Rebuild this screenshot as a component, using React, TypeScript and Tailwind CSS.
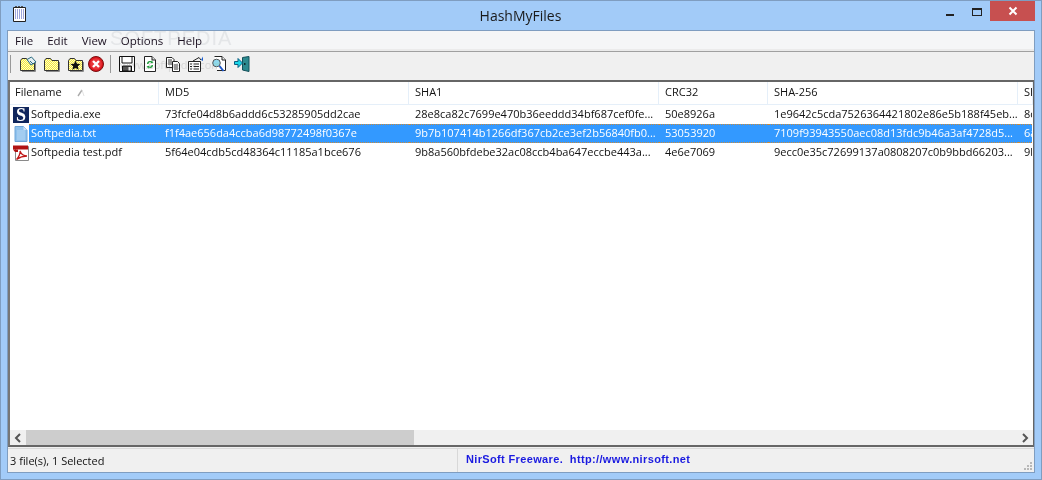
import React from "react";

const font = { fontFamily: '"Open Sans","Noto Sans",sans-serif' };

const rows = [
  { icon: "exe", cells: ["Softpedia.exe", "73fcfe04d8b6addd6c53285905dd2cae", "28e8ca82c7699e470b36eeddd34bf687cef0fe...", "50e8926a", "1e9642c5cda7526364421802e86e5b188f45eb...", "8c"], sel: false },
  { icon: "txt", cells: ["Softpedia.txt", "f1f4ae656da4ccba6d98772498f0367e", "9b7b107414b1266df367cb2ce3ef2b56840fb0...", "53053920", "7109f93943550aec08d13fdc9b46a3af4728d5...", "6a"], sel: true },
  { icon: "pdf", cells: ["Softpedia test.pdf", "5f64e04cdb5cd48364c11185a1bce676", "9b8a560bfdebe32ac08ccb4ba647eccbe443a...", "4e6e7069", "9ecc0e35c72699137a0808207c0b9bbd66203...", "9b"], sel: false },
];

const widths = ["w-[149px]", "w-[250px]", "w-[250px]", "w-[109px]", "w-[250px]", "w-[15px]"];
const cellWidths = ["w-[130px]", "w-[250px]", "w-[250px]", "w-[109px]", "w-[250px]", "w-[14px]"];
const heads = ["Filename", "MD5", "SHA1", "CRC32", "SHA-256", "SHA-512"];

function FolderIcon({ id, star, open }: { id: string; star?: boolean; open?: boolean }) {
  return (
    <svg width="18" height="16" viewBox="0 0 18 16">
      <defs>
        <pattern id={id} width="2" height="2" patternUnits="userSpaceOnUse">
          <rect width="2" height="2" fill="#fffbc8" />
          <rect width="1" height="1" fill="#f4e93c" />
          <rect x="1" y="1" width="1" height="1" fill="#f4e93c" />
        </pattern>
      </defs>
      <path d="M1.5 14.5V4.5L3 2.5H7.5L9 4.5H15.5V14.5Z" fill={`url(#${id})`} stroke="#333" />
      <path d="M16.5 6V15.5H3" fill="none" stroke="#8a8a8a" />
      {star && <path d="M8.5 4.5L10 7.8L13.5 8L10.8 10.3L11.7 13.7L8.5 11.9L5.3 13.7L6.2 10.3L3.5 8L7 7.8Z" fill="#111" />}
      {open && (
        <>
          <path d="M8 3.5L12.5 1L17 6L12 9Z" fill="#e4eef2" stroke="#2a6b80" />
          <path d="M11 5L14 8" stroke="#2a6b80" />
        </>
      )}
    </svg>
  );
}

function ToolIcon({ name }: { name: string }) {
  switch (name) {
    case "open":
      return <FolderIcon id="d1" open />;
    case "folder":
      return <FolderIcon id="d2" />;
    case "star":
      return <FolderIcon id="d3" star />;
    case "stop":
      return (
        <svg width="16" height="16" viewBox="0 0 16 16" className="ml-[-3px]">
          <circle cx="8" cy="8" r="7.5" fill="#d9141c" stroke="#7a1010" />
          <circle cx="8" cy="8" r="5.8" fill="#e8353a" />
          <path d="M5 5L11 11M11 5L5 11" stroke="#fff" strokeWidth="2.4" />
        </svg>
      );
    case "save":
      return (
        <svg width="16" height="16" viewBox="0 0 16 16">
          <path d="M0.5 0.5H15.5V15.5H0.5Z" fill="#fff" stroke="#111" />
          <path d="M3 1V7H13V1" fill="#fff" stroke="#111" />
          <path d="M3.5 15V10H12.5V15Z" fill="#555" stroke="#111" />
          <rect x="9.5" y="11" width="2" height="3.5" fill="#eee" />
        </svg>
      );
    case "refresh":
      return (
        <svg width="16" height="16" viewBox="0 0 16 16">
          <path d="M2.5 0.5H10L13.5 4V15.5H2.5Z" fill="#fff" stroke="#222" />
          <path d="M10 0.5V4H13.5" fill="#ddd" stroke="#222" />
          <path d="M5 8C5 5.5 7 4.5 9.5 5.5L9 4L11.5 6.5L8.5 7.5L9 6.5C7.5 6 6.5 6.8 6.5 8Z" fill="#1d9a3a" />
          <path d="M11 9C11 11.5 9 12.5 6.5 11.5L7 13L4.5 10.5L7.5 9.5L7 10.5C8.5 11 9.5 10.2 9.5 9Z" fill="#1d9a3a" />
        </svg>
      );
    case "copy":
      return (
        <svg width="16" height="16" viewBox="0 0 16 16">
          <path d="M1.5 1.5H7L9 3.5V11.5H1.5Z" fill="#fff" stroke="#222" />
          <path d="M3 4H7M3 6H7M3 8H7" stroke="#333" />
          <path d="M7.5 5.5H12.5L14.5 7.5V15.5H7.5Z" fill="#fff" stroke="#222" />
          <path d="M9 9H13M9 11H13M9 13H13" stroke="#333" />
        </svg>
      );
    case "props":
      return (
        <svg width="16" height="16" viewBox="0 0 16 16">
          <path d="M0.5 5.5H12.5V15.5H0.5Z" fill="#fff" stroke="#222" />
          <path d="M2 8H4M5.5 8H11M2 10.5H4M5.5 10.5H11M2 13H4M5.5 13H11" stroke="#222" />
          <path d="M5 5L11 1.5L13 4" fill="none" stroke="#222" />
          <path d="M13 4L15 0.5V5Z" fill="#1b5fd0" />
        </svg>
      );
    case "find":
      return (
        <svg width="16" height="16" viewBox="0 0 16 16">
          <path d="M3.5 0.5H11L14.5 4V14.5H6" fill="#fff" stroke="#222" />
          <path d="M11 0.5V4H14.5" fill="#eee" stroke="#222" />
          <circle cx="5.5" cy="7" r="3.8" fill="#8fd8ee" stroke="#555" />
          <path d="M8.5 10L12.5 15" stroke="#1b55c8" strokeWidth="2" />
        </svg>
      );
    default:
      return (
        <svg width="16" height="16" viewBox="0 0 16 16">
          <path d="M8.5 1.5L15 0.5V15.5L8.5 14Z" fill="#2c8a8f" stroke="#14505a" />
          <rect x="10" y="7" width="1.5" height="2" fill="#0c2d33" />
          <path d="M0.5 5.5H4V2.5L8.5 7L4 11.5V8.5H0.5Z" fill="#19d6e8" stroke="#0b5d80" />
        </svg>
      );
  }
}

function FileIcon({ kind }: { kind: string }) {
  if (kind === "exe")
    return (
      <div className="w-4 h-4 bg-[#10265c] flex items-center justify-center text-white text-[18px] font-bold leading-none" style={{ fontFamily: '"Liberation Serif",serif' }}>
        S
      </div>
    );
  if (kind === "txt")
    return (
      <svg width="16" height="16" viewBox="0 0 16 16">
        <path d="M2 0.5H10.5L14 4V15.5H2Z" fill="#8fc1ec" stroke="#6fa6d8" />
        <path d="M10.5 0.5V4H14Z" fill="#cfe4f7" />
        <path d="M4 5H12M4 7H12M4 9H12M4 11H12M4 13H12" stroke="#b6d8f5" />
      </svg>
    );
  return (
    <svg width="16" height="16" viewBox="0 0 16 16">
      <path d="M2.5 1.5H15.5V15.5H2.5Z" fill="#fff" stroke="#8a8a8a" />
      <path d="M0 0.5H15V4.5H0Z" fill="#b01313" />
      <path d="M0 4.5H5V7H2Z" fill="#b01313" />
      <path d="M3.5 14.5C6 12 7.5 8 7 6C8 8.5 10 11 14 11C10.5 11 7 12 3.5 14.5Z" fill="none" stroke="#c01818" strokeWidth="1.3" />
    </svg>
  );
}

export default function App() {
  return (
    <div className="w-[1042px] h-[480px] flex flex-col overflow-hidden bg-[#a2cbf8] border border-[#7f9dc0] text-[11px] text-[#111]" style={font}>
      <div className="h-[29px] shrink-0 flex items-center relative">
        <div className="w-[39px] pl-[11px] pb-[1px]">
          <svg width="16" height="16" viewBox="0 0 16 16" className="mt-[-3px]">
            <path d="M1.5 1.5H13.5V15.5H1.5Z" fill="#fff" stroke="#222" />
            <path d="M3 4H12M3 6H12M3 8H12M3 10H12M3 12H12" stroke="#3a4ab8" strokeDasharray="1 1" />
            <path d="M3 0.5H5M6 0.5H8M9 0.5H11" stroke="#555" />
          </svg>
        </div>
        <div className="flex-1 text-center text-[14px] text-[#1a1a1a] pl-[55px] pb-[1px]">HashMyFiles</div>
        <div className="flex items-start self-start h-full">
          <div className="w-[8px] mt-[13px] mr-[18px] h-[2px] bg-[#222]" />
          <div className="w-[10px] h-[8px] mt-[7px] mr-[8px] border border-t-2 border-[#222]" />
          <div className="w-[45px] h-[20px] mr-[6px] bg-[#c75050] flex items-center justify-center">
            <svg width="10" height="10" viewBox="0 0 10 10"><path d="M1.5 1.5L8.5 8.5M8.5 1.5L1.5 8.5" stroke="#fff" strokeWidth="2" /></svg>
          </div>
        </div>
      </div>

      <div className="ml-[6px] mr-[6px] h-[443px] shrink-0 border border-[#7f9dc0] flex flex-col bg-[#f0f0f0] relative">
        <div className="h-[20px] shrink-0 bg-[#f5f6f7] flex items-center pl-[7px] pt-[1px] gap-[14px] border-b-2 border-[#ebebeb] text-[11.5px]">
          {["File", "Edit", "View", "Options", "Help"].map((m) => (
            <span key={m} className="text-[#1a1020]">{m}</span>
          ))}
        </div>
        <div className="h-[29px] shrink-0 border-t border-[#a0a0a0] flex items-center pl-[2px] pb-[4px]">
          <div className="w-[1px] h-[18px] bg-[#999] mr-[8px]" />
          <div className="flex items-center gap-[6px]">
            {["open", "folder", "star", "stop"].map((n) => <ToolIcon key={n} name={n} />)}
          </div>
          <div className="w-[1px] h-[18px] bg-[#999] ml-[6px] mr-[8px]" />
          <div className="flex items-center gap-[7px]">
            {["save", "refresh", "copy", "props", "find", "exit"].map((n) => <ToolIcon key={n} name={n} />)}
          </div>
        </div>

        <div className="flex-1 min-h-0 border-2 border-r border-[#666] border-l-[#777] bg-white flex flex-col overflow-hidden">
          <div className="h-[23px] shrink-0 flex border-b border-[#e5eff9]">
            {heads.map((h, i) => (
              <div key={h} className={`${widths[i]} shrink-0 overflow-hidden whitespace-nowrap border-r border-[#e5eff9] ${i === 0 ? "pl-[5px]" : "pl-[6px]"} pb-[1px] flex items-center`}>
                {h}
                {i === 0 && (
                  <svg width="8" height="8" viewBox="0 0 8 8" className="ml-[15px]"><path d="M1 7L5 1" stroke="#aaa" strokeWidth="1.4" /><path d="M5 1L7 7" stroke="#e3e3e3" /></svg>
                )}
              </div>
            ))}
          </div>
          <div className="flex-1 min-h-0">
            {rows.map((r) => (
              <div key={r.icon} className="h-[19px] flex items-center">
                <div className="w-[19px] shrink-0 pl-[3px]"><FileIcon kind={r.icon} /></div>
                {r.cells.map((c, i) => (
                  <div
                    key={i}
                    className={`${cellWidths[i]} shrink-0 overflow-hidden whitespace-nowrap h-[19px] flex items-center ${i === 0 ? "pl-[2px]" : "pl-[6px]"} ${r.sel ? "bg-[#3399ff] text-white border-y border-dotted border-[#c98a3a]" : ""}`}
                  >
                    {c}
                  </div>
                ))}
              </div>
            ))}
          </div>
          <div className="h-[15px] shrink-0 bg-[#f0f0f0] flex items-center">
            <div className="w-[16px] flex justify-center">
              <svg width="8" height="10" viewBox="0 0 8 10"><path d="M6 1L2 5L6 9" fill="none" stroke="#555" strokeWidth="2" /></svg>
            </div>
            <div className="w-[388px] h-full bg-[#cdcdcd]" />
            <div className="flex-1" />
            <div className="w-[17px] flex justify-center">
              <svg width="8" height="10" viewBox="0 0 8 10"><path d="M2 1L6 5L2 9" fill="none" stroke="#555" strokeWidth="2" /></svg>
            </div>
          </div>
        </div>

        <div className="h-[24px] mt-[1px] border-t border-[#d9d9d9] flex shrink-0 relative">
          <div className="w-[450px] pl-[2px] pt-[1px] flex items-center border-r border-[#d8d8d8]">3 file(s), 1 Selected</div>
          <div className="flex-1 pl-[8px] pb-[2px] flex items-center font-bold text-[11px] tracking-[0.35px] text-[#1a1ae0] whitespace-pre" style={{ fontFamily: '"Liberation Sans",sans-serif' }}>
            NirSoft Freeware.  http://www.nirsoft.net
          </div>
          <svg width="8" height="8" viewBox="0 0 8 8" className="absolute right-[2px] bottom-[2px]">
            <g fill="#b8b8b8">
              <rect x="6" y="0" width="2" height="2" /><rect x="3" y="3" width="2" height="2" /><rect x="6" y="3" width="2" height="2" />
              <rect x="0" y="6" width="2" height="2" /><rect x="3" y="6" width="2" height="2" /><rect x="6" y="6" width="2" height="2" />
            </g>
          </svg>
        </div>

        <div className="absolute left-[102px] top-[-8px] text-[#e4e6e8] text-[20px] tracking-[1px] pointer-events-none mix-blend-darken" style={{ fontFamily: '"Liberation Sans",sans-serif' }}>SOFTPEDIA</div>
        <div className="absolute left-[112px] top-[26px] text-[#d6d6d6] text-[11px] pointer-events-none mix-blend-darken">www.softpedia.com</div>
      </div>
    </div>
  );
}
